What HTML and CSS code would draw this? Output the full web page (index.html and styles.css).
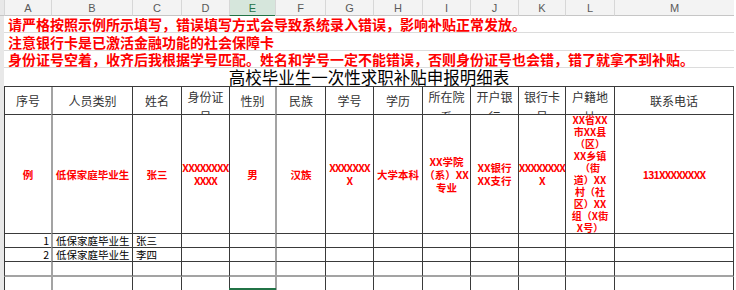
FILE: index.html
```html
<!DOCTYPE html>
<html lang="zh-CN">
<head>
<meta charset="utf-8">
<title>高校毕业生一次性求职补贴申报明细表</title>
<link rel="stylesheet" href="styles.css">
</head>
<body>
<div class="sheet">
  <div class="corner"></div>
  <div class="col">A</div><div class="col">B</div><div class="col">C</div><div class="col">D</div>
  <div class="col sel">E</div><div class="col">F</div><div class="col">G</div><div class="col">H</div>
  <div class="col">I</div><div class="col">J</div><div class="col">K</div><div class="col">L</div><div class="col">M</div>

  <div class="gutter"></div>

  <div class="note"><span>请严格按照示例所示填写，错误填写方式会导致系统录入错误，影响补贴正常发放。</span></div>
  <div class="note"><span>注意银行卡是已激活金融功能的社会保障卡</span></div>
  <div class="note"><span>身份证号空着，收齐后我根据学号匹配。姓名和学号一定不能错误，否则身份证号也会错，错了就拿不到补贴。</span></div>
  <div class="title"><span>高校毕业生一次性求职补贴申报明细表</span></div>

  <div class="c h"><span>序号</span></div>
  <div class="c h thick"><span>人员类别</span></div>
  <div class="c h"><span>姓名</span></div>
  <div class="c h wrap"><span>身份证<br>号</span></div>
  <div class="c h"><span>性别</span></div>
  <div class="c h thick"><span>民族</span></div>
  <div class="c h"><span>学号</span></div>
  <div class="c h"><span>学历</span></div>
  <div class="c h wrap"><span>所在院<br>系</span></div>
  <div class="c h wrap"><span>开户银<br>行</span></div>
  <div class="c h wrap"><span>银行卡<br>号</span></div>
  <div class="c h wrap"><span>户籍地<br>址</span></div>
  <div class="c h last"><span>联系电话</span></div>

  <div class="c ex"><span>例</span></div>
  <div class="c ex thick"><span>低保家庭毕业生</span></div>
  <div class="c ex"><span>张三</span></div>
  <div class="c ex"><span class="x">XXXXXXXX<br>XXXX</span></div>
  <div class="c ex"><span>男</span></div>
  <div class="c ex thick"><span>汉族</span></div>
  <div class="c ex"><span class="x">XXXXXXX<br>X</span></div>
  <div class="c ex"><span>大学本科</span></div>
  <div class="c ex"><span>XX学院<br>（系）XX<br>专业</span></div>
  <div class="c ex"><span>XX银行<br>XX支行</span></div>
  <div class="c ex"><span class="x">XXXXXXXX<br>X</span></div>
  <div class="c ex addr"><span>XX省XX<br>市XX县<br>（区）<br>XX乡镇<br>（街<br>道）XX<br>村（社<br>区）XX<br>组（X街<br>X号）</span></div>
  <div class="c ex last"><span class="x">131XXXXXXXX</span></div>

  <div class="c d num"><span>1</span></div>
  <div class="c d txt thick"><span>低保家庭毕业生</span></div>
  <div class="c d txt"><span>张三</span></div>
  <div class="c"></div><div class="c"></div><div class="c thick"></div><div class="c"></div>
  <div class="c"></div><div class="c"></div><div class="c"></div><div class="c"></div><div class="c"></div>
  <div class="c last"></div>

  <div class="c d num"><span>2</span></div>
  <div class="c d txt thick"><span>低保家庭毕业生</span></div>
  <div class="c d txt"><span>李四</span></div>
  <div class="c"></div><div class="c"></div><div class="c thick"></div><div class="c"></div>
  <div class="c"></div><div class="c"></div><div class="c"></div><div class="c"></div><div class="c"></div>
  <div class="c last"></div>

  <div class="c r9"></div><div class="c r9 thick"></div><div class="c r9"></div><div class="c r9"></div>
  <div class="c r9"></div><div class="c r9 thick"></div><div class="c r9"></div><div class="c r9"></div>
  <div class="c r9"></div><div class="c r9"></div><div class="c r9"></div><div class="c r9"></div>
  <div class="c r9 last"></div>

  <div class="c r10"></div><div class="c r10 thick"></div><div class="c r10"></div><div class="c r10"></div>
  <div class="c r10 selected"></div><div class="c r10 thick"></div><div class="c r10"></div><div class="c r10"></div>
  <div class="c r10"></div><div class="c r10"></div><div class="c r10"></div><div class="c r10"></div>
  <div class="c r10 last"></div>
</div>
</body>
</html>
```

FILE: styles.css
```css
html, body {
  margin: 0;
  padding: 0;
  background: #ffffff;
  overflow: hidden;
}

body {
  font-family: "Noto Sans CJK SC", "Noto Sans", sans-serif;
}

.sheet {
  display: grid;
  grid-template-columns: 4px 47px 81px 49px 48px 46px 50px 48px 49px 48px 48px 47px 49px 120px;
  grid-template-rows: 16px 17px 18px 17px 19px 28px 119px 14px 14px 15px 14px;
  width: 734px;
  height: 290px;
  overflow: hidden;
}

.corner {
  background: #e8e8e8;
  border-bottom: 1px solid #c6c6c6;
}

.col {
  background: #f3f3f3;
  border-left: 1px solid #d7d7d7;
  border-bottom: 1px solid #c6c6c6;
  font: 11px "Liberation Sans", Arial, sans-serif;
  color: #595959;
  display: flex;
  align-items: center;
  justify-content: center;
}

.col.sel {
  background: #d6e6dc;
  color: #217346;
  border-bottom: 1px solid #217346;
}

.gutter {
  grid-column: 1;
  grid-row: 2 / -1;
  background: #e8e8e8;
}

.note {
  grid-column: 2 / -1;
  border-bottom: 1px solid #dcdcdc;
  color: #ff0000;
  font-size: 14px;
  font-weight: 700;
  line-height: 1;
  padding-left: 4px;
  display: flex;
  align-items: center;
  white-space: nowrap;
}

.title {
  grid-column: 2 / -1;
  border-bottom: 1px solid #3a3a3a;
  font-size: 16.5px;
  color: #000000;
  display: flex;
  align-items: center;
  justify-content: center;
  white-space: nowrap;
}

.c {
  border-left: 1px solid #3a3a3a;
  border-bottom: 1px solid #3a3a3a;
  display: flex;
  align-items: center;
  justify-content: center;
  text-align: center;
  overflow: hidden;
  min-width: 0;
  white-space: nowrap;
}

.c > span {
  display: block;
}

.c.thick {
  border-left: 2px solid #a3a3a3;
}

.c.last {
  border-right: 1px solid #3a3a3a;
}

.h {
  font-size: 12px;
  color: #333333;
  line-height: 14px;
}

.h.wrap {
  align-items: flex-start;
  line-height: 20px;
}

.ex {
  color: #ff0000;
  font-size: 10.5px;
  font-weight: 700;
  line-height: 13px;
}

.ex .x {
  letter-spacing: -0.8px;
}

.ex.addr {
  font-size: 10px;
  line-height: 12px;
}

.d {
  font-size: 10.5px;
  color: #000000;
  line-height: 12px;
}

.d.num {
  justify-content: flex-end;
  padding-right: 2px;
}

.d.txt {
  justify-content: flex-start;
  padding-left: 3px;
}

.r9 {
  border-bottom: 2px solid #a3a3a3;
}

.r10 {
  border-bottom: none;
}

.selected {
  position: relative;
  overflow: visible;
}

.selected::after {
  content: "";
  position: absolute;
  left: -1px;
  right: -1px;
  top: 11px;
  height: 2px;
  background: #217346;
}
```
